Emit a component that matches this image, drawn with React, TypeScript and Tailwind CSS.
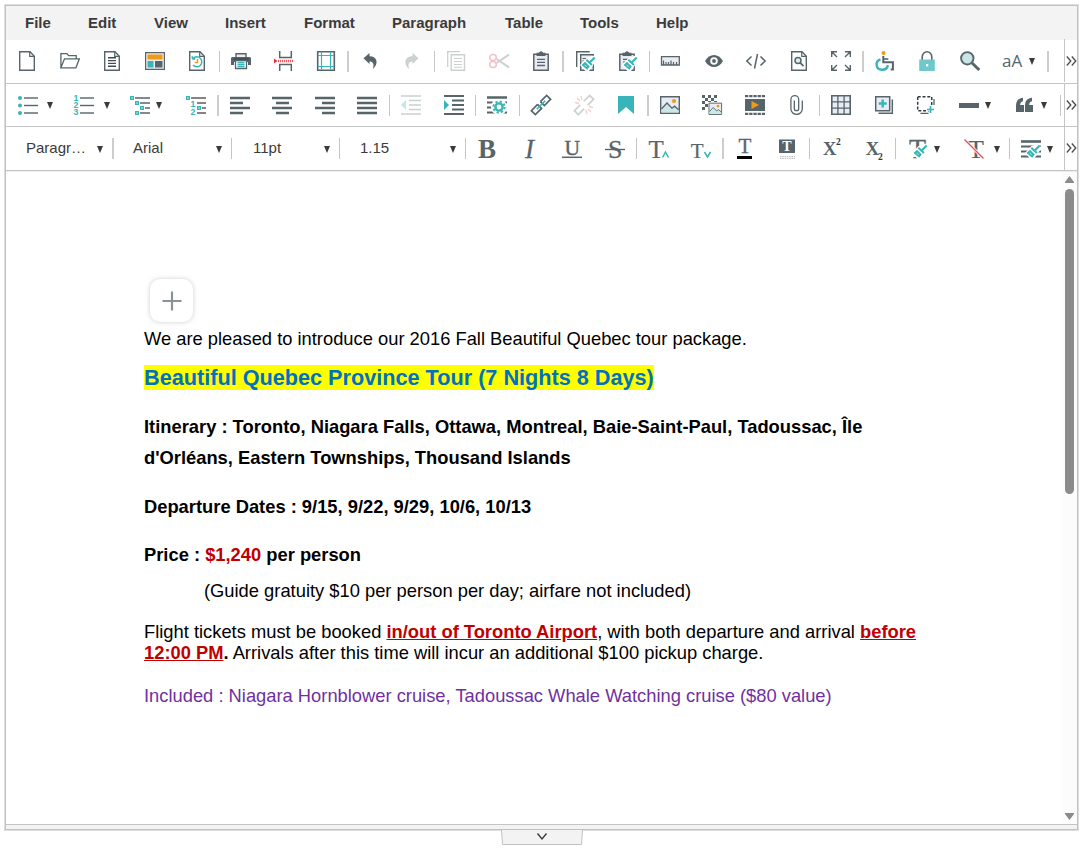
import type { ReactNode } from 'react';

const D = '#57656a';
const T = '#37b5b8';
const O = '#ef9b16';
const L = '#ebebf3';

const serif = { fontFamily: '"Liberation Serif", serif' } as const;

function Tool({ at, children, faded = false, label }: { at: string; children: ReactNode; faded?: boolean; label: string }) {
  return (
    <button aria-label={label} className={`${at} h-5 w-5 shrink-0 ${faded ? 'opacity-30' : ''}`}>
      <svg width="20" height="20" viewBox="0 0 20 20" fill="none" className="block overflow-visible">
        {children}
      </svg>
    </button>
  );
}

function Sep({ at, thick = false }: { at: string; thick?: boolean }) {
  return <span className={`${at} h-[21px] shrink-0 ${thick ? 'w-0.5 bg-[#cdcdcd]' : 'w-px bg-[#c5c5c5]'}`} />;
}

function Arrow({ at }: { at: string }) {
  return (
    <svg width="6" height="7" viewBox="0 0 6 7" className={`${at} mt-px shrink-0`}>
      <path d="M0 0h6L3 7z" fill="#3b3b3b" />
    </svg>
  );
}

function Row({ children, height }: { children: ReactNode; height: string }) {
  return (
    <div className={`flex ${height} border-[#c5c5c5]`}>
      <div className="flex min-w-0 flex-1 items-center">{children}</div>
      <button aria-label="More" className="-mt-px flex w-[13px] shrink-0 items-center border-l border-[#c5c5c5] pl-px">
        <svg width="11" height="10" viewBox="0 0 11 10" fill="none" stroke="#4a4a4a" strokeWidth="1.3">
          <path d="M.8.5l4 4.5-4 4.5M5.8.5l4 4.5-4 4.5" />
        </svg>
      </button>
    </div>
  );
}

const page = (
  <>
    <path d="M2.7.7h10.3l4.3 4.5v14.1H2.7z" fill="#fff" stroke={D} strokeWidth="1.4" />
    <path d="M12.7.7v4.6h4.6" stroke={D} strokeWidth="1.2" />
  </>
);

const brush = (
  <>
    <path d="M17.5 4.5L10.5 7l-6.500 7 5.500 6H13l7.500-11z" fill="#fff" />
    <path d="M18.700 6.500l-5 5" stroke={T} strokeWidth="2.200" />
    <path d="M10.300 8.700l5.600 5.300" stroke={T} strokeWidth="2" />
    <path d="M9 10.700l4.800 4.700-2.600 3.400L5.500 14z" fill={T} />
    <path d="M8.800 13.800l1.800 2" stroke="#b9e6e6" strokeWidth="1" />
  </>
);

const menus: [string, string][] = [
  ['File', 'w-[63px]'],
  ['Edit', 'w-[66px]'],
  ['View', 'w-[71px]'],
  ['Insert', 'w-[79px]'],
  ['Format', 'w-[88px]'],
  ['Paragraph', 'w-[113px]'],
  ['Table', 'w-[75px]'],
  ['Tools', 'w-[76px]'],
  ['Help', 'w-[60px]'],
];

function FileRow() {
  return (
    <Row height="h-11 border-b pb-px">
      <Tool at="ml-[11px]" label="New">{page}</Tool>
      <Tool at="ml-[23px]" label="Open">
        <path d="M.9 16.8V2.7h6l1.8 2h7.500v3M.9 16.8L4.500 7.8h14.8l-3.400 9z" stroke={D} strokeWidth="1.3" />
      </Tool>
      <Tool at="ml-[22px]" label="Document">
        {page}
        <path d="M6 6.8h8M6 9.6h8M6 12.4h8M6 15.2h8" stroke="#444b50" strokeWidth="1.4" />
      </Tool>
      <Tool at="ml-[23px]" label="Template">
        <path d="M.6 1.6h18.8v16.8H.6z" fill={L} stroke={D} strokeWidth="1.2" />
        <path d="M2.5 3.5h15v5h-15z" fill={O} />
        <path d="M2.5 10h6v6.5h-6z" fill={T} />
        <path d="M10 10h7.5v6.5H10z" fill={D} />
      </Tool>
      <Tool at="ml-[22px]" label="History">
        {page}
        <path d="M5.2 8h3M5.3 7.5V5.3M6 7.6a5 5 0 1 1 0 6.5" stroke={T} strokeWidth="1.5" />
        <path d="M10.5 8v3.5H7.7" stroke={O} strokeWidth="1.5" />
      </Tool>
      <Sep at="ml-3" />
      <Tool at="ml-[11px]" label="Print">
        <path d="M5 2.700h10v4H5z" fill="#eee" stroke={D} strokeWidth="1.4" />
        <path d="M1 6h18l1 1v7h-3v-3H3v3H0V7z" fill={D} />
        <path d="M2.5 8h15" stroke="#3d494d" strokeWidth="1.5" />
        <path d="M4.5 9.5h11v8h-11z" fill="#fff" stroke={D} strokeWidth="1.3" />
        <path d="M6.5 11.5h7M6.5 13.5h7M6.5 15.500h7" stroke={T} strokeWidth="1.3" />
      </Tool>
      <Tool at="ml-[23px]" label="Page break">
        <path d="M5.7 0v6.5h11.6V0M5.7 20v-6.5h11.6V20" stroke={D} strokeWidth="1.5" />
        <path d="M0 7.5v5l3.5-2.5z" fill="#e8333f" />
        <path d="M4 10h15.5" stroke="#ef5b65" strokeWidth="2.5" strokeDasharray="1.2 .8" />
      </Tool>
      <Tool at="ml-[22px]" label="Margins">
        <path d="M1.7.7h16.6v18.6H1.7z" stroke={D} strokeWidth="1.6" />
        <path d="M5.5 1v18M14.500 1v18M2 4.500h16M2 15.500h16" stroke={T} strokeWidth="1.2" />
      </Tool>
      <Sep at="ml-[11px]" thick />
      <Tool at="ml-[11px]" label="Undo">
        <path d="M3.5 7.300L9.500 2v3.200c8 0 9.500 7.500 3.200 13 2-5.300.2-7.800-3.200-7.800v2.700z" fill={D} />
      </Tool>
      <Tool at="ml-[22px]" label="Redo" faded>
        <path d="M16.500 7.300L10.500 2v3.200c-8 0-9.500 7.500-3.200 13-2-5.300-.2-7.800 3.200-7.800v2.700z" fill={D} />
      </Tool>
      <Sep at="ml-3" />
      <Tool at="ml-[11px]" label="Copy" faded>
        <path d="M1.7 16V.7H14" stroke={D} strokeWidth="1.3" />
        <path d="M5.2 3.7h13.3v15.5H5.2z" stroke={D} strokeWidth="1.4" />
        <path d="M8 7.5h8M8 10.5h8M8 13.5h8M8 16.2h8" stroke={D} strokeWidth="1.1" />
      </Tool>
      <Tool at="ml-[23px]" label="Cut" faded>
        <path d="M7.500 12L20 3.700M7.500 8L20 16.300" stroke={D} strokeWidth="2" />
        <ellipse cx="4" cy="6.500" rx="3.300" ry="3" stroke="#e8333f" strokeWidth="1.5" />
        <ellipse cx="4" cy="13.500" rx="3.300" ry="3" stroke="#e8333f" strokeWidth="1.5" />
      </Tool>
      <Tool at="ml-[22px]" label="Paste">
        <path d="M2.8 3.2h14.4v16H2.8z" fill={L} stroke={D} strokeWidth="1.5" />
        <path d="M5.5 1.8h2.3a2.3 2.3 0 0 1 4.400 0h2.3V5h-9z" fill={D} />
        <path d="M6 8.300h8M6 11.300h8M6 14.500h8" stroke={D} strokeWidth="1.3" />
      </Tool>
      <Sep at="ml-[11px]" thick />
      <Tool at="ml-3" label="Copy format">
        <path d="M.7 16V.8h13" stroke={D} strokeWidth="1.4" />
        <path d="M4.7 3.8h12.6v15.400H4.7z" fill={L} stroke={D} strokeWidth="1.4" />
        <path d="M6.500 7.500h8M6.500 10h4" stroke={D} strokeWidth="1.2" />
        {brush}
      </Tool>
      <Tool at="ml-[22px]" label="Paste format">
        <path d="M1.8 3.2h14.400v16H1.8z" fill={L} stroke={D} strokeWidth="1.5" />
        <path d="M4.500 1.800h2.300a2.300 2.300 0 0 1 4.400 0h2.300V5h-9z" fill={D} />
        <path d="M5 8.300h8M5 11h3" stroke={D} strokeWidth="1.2" />
        {brush}
      </Tool>
      <Sep at="ml-[11px]" />
      <Tool at="ml-[10px]" label="Ruler">
        <path d="M1.500 5.700h17.800v8.300H1.500z" fill={L} stroke={D} strokeWidth="1.3" />
        <path d="M3.500 14V9.500M6 14v-3M8.500 14v-3M11 14V9.500M13.500 14v-3M16.500 14v-3" stroke={D} strokeWidth="1.2" />
      </Tool>
      <Tool at="ml-6" label="Preview">
        <path d="M1 10c4.500-8 13.500-8 18 0-4.500 8-13.500 8-18 0z" fill={D} />
        <circle cx="10" cy="10" r="3.8" fill="#fff" />
        <circle cx="10" cy="10" r="1.9" fill={D} />
      </Tool>
      <Tool at="ml-[22px]" label="Source">
        <path d="M5.500 5.500L.8 10l4.700 4.500M14.500 5.500l4.700 4.500-4.700 4.500M11.500 3L8.500 17.500" stroke={D} strokeWidth="1.5" />
      </Tool>
      <Tool at="ml-[23px]" label="Print preview">
        {page}
        <circle cx="9" cy="9.500" r="3" fill="#dcecf4" stroke={D} strokeWidth="1.5" />
        <path d="M11.300 11.800l3.200 3.400" stroke={D} strokeWidth="1.8" />
      </Tool>
      <Tool at="ml-[22px]" label="Full screen">
        <path d="M.7 6V.7H6M.7.7L6 6M14 .7h5.300V6M19.300.7L14 6M.7 14v5.300H6M.7 19.300L6 14M14 19.300h5.300V14M19.300 19.300L14 14" stroke={D} strokeWidth="1.4" />
      </Tool>
      <Sep at="ml-[11px]" thick />
      <Tool at="ml-[11px]" label="Accessibility">
        <circle cx="8.500" cy="2" r="2" fill={O} />
        <path d="M8.300 5v6.300h9.600v7.200h-2.200" stroke={D} strokeWidth="2" />
        <path d="M8.300 8h5" stroke={D} strokeWidth="1.600" />
        <path d="M5.500 8.300C-.3 10 .5 18.800 7 18.800c3.500 0 5.500-2 5.800-4.800" stroke={T} strokeWidth="2.400" />
      </Tool>
      <Tool at="ml-[22px]" label="Lock">
        <path d="M5.200 9V6a4.800 5.200 0 0 1 9.600 0v3" stroke={D} strokeWidth="1.6" />
        <path d="M2.200 8.500h15.600V20H2.200z" fill="#6fc9ca" />
        <path d="M9 13h2.200v2.400H9z" fill="#fff" />
      </Tool>
      <Tool at="ml-[23px]" label="Find">
        <path d="M12 12l7.300 7" stroke={D} strokeWidth="3" />
        <circle cx="7.300" cy="7.300" r="6.200" fill="#c9e5e6" stroke={D} strokeWidth="1.9" />
      </Tool>
      <span className="ml-[22px] w-[23px] shrink-0 font-['Open_Sans',sans-serif] text-[17px] leading-5 text-[#57656a]">aA</span>
      <Arrow at="ml-[4px]" />
      <Sep at="ml-3" thick />
    </Row>
  );
}

const numbers = [1, 2, 3];
const miniSquare = (x: number, y: number) => <rect key={`${x}-${y}`} x={x} y={y} width="2.6" height="2.6" stroke={T} strokeWidth="1.4" />;

const gear = (
  <>
    <circle cx="12" cy="12" r="8" fill="#fff" />
    <circle cx="12" cy="12" r="5.6" stroke={T} strokeWidth="2" strokeDasharray="2.2 2.2" />
    <circle cx="12" cy="12" r="3.6" stroke={T} strokeWidth="2.4" />
  </>
);

const photo = (
  <>
    <path d="M.7 1.7h18.6v16.6H.7z" fill={L} stroke={D} strokeWidth="1.4" />
    <path d="M1.400 14l5.600-6 5 5.200 2.500-2 4.200 3.500v2.900H1.400z" fill="#cbe7e7" />
    <path d="M1.400 14L7 8l5 5.200 2.500-2 4.200 3.500" stroke={D} strokeWidth="1.3" />
    <circle cx="14" cy="6" r="2.1" fill={O} />
  </>
);

function InsertRow() {
  return (
    <Row height="h-[43px] border-b">
      <Tool at="ml-3" label="Bullets">
        {[3, 10.5, 18].map((y) => (
          <g key={y}>
            <circle cx="2" cy={y} r="2" fill={T} />
            <path d={`M6 ${y}h14`} stroke={D} strokeWidth="1.4" />
          </g>
        ))}
      </Tool>
      <Arrow at="ml-[9px]" />
      <Tool at="ml-[21px]" label="Numbering">
        {numbers.map((n) => (
          <g key={n}>
            <path d={`M6 ${n * 7.5 - 4.5}h14`} stroke={D} strokeWidth="1.4" />
            <text x="-.5" y={n * 7.2 - 1.2} fontSize="8.8" fontWeight="700" fill={T} fontFamily="Liberation Sans, sans-serif">{n}</text>
          </g>
        ))}
      </Tool>
      <Arrow at="ml-[10px]" />
      <Tool at="ml-5" label="Multilevel list">
        {miniSquare(0.7, 1.7)}
        {miniSquare(5.7, 6.7)}
        {miniSquare(10.7, 11.7)}
        {miniSquare(5.7, 16.7)}
        <path d="M5 3h15M10 8h10M15 13h5M10 18h10" stroke={D} strokeWidth="1.500" />
      </Tool>
      <Arrow at="ml-[6px]" />
      <Tool at="ml-6" label="Outline">
        {miniSquare(0.7, 1.7)}
        {miniSquare(11.7, 11.7)}
        <path d="M5 3h15M11 8h9M16 13h4M11 18h9" stroke="#62595d" strokeWidth="1.500" />
        <text x="4.500" y="12.200" fontSize="8.800" fontWeight="700" fill={T} fontFamily="Liberation Sans, sans-serif">1</text>
        <text x="4.500" y="20.200" fontSize="8.800" fontWeight="700" fill={T} fontFamily="Liberation Sans, sans-serif">2</text>
      </Tool>
      <Sep at="ml-[11px]" thick />
      <Tool at="ml-[11px]" label="Align left">
        <path d="M0 3h20M0 8h13M0 13h20M0 18h13" stroke={D} strokeWidth="2.4" />
      </Tool>
      <Tool at="ml-[22px]" label="Align center">
        <path d="M0 3h20M4 8h13M0 13h20M4 18h13" stroke={D} strokeWidth="2.4" />
      </Tool>
      <Tool at="ml-[23px]" label="Align right">
        <path d="M0 3h20M7 8h13M0 13h20M7 18h13" stroke={D} strokeWidth="2.4" />
      </Tool>
      <Tool at="ml-[22px]" label="Justify">
        <path d="M0 3h20M0 8h20M0 13h20M0 18h20" stroke={D} strokeWidth="2.4" />
      </Tool>
      <Sep at="ml-3" />
      <Tool at="ml-[11px]" label="Outdent" faded>
        <path d="M0 1h20M8 5.500h12M8 10h12M8 14.500h12M0 19h20" stroke={D} strokeWidth="1.7" />
        <path d="M5 5v10L0 10z" fill={T} />
      </Tool>
      <Tool at="ml-[23px]" label="Indent">
        <path d="M0 1h20M8 5.500h12M8 10h12M8 14.500h12M0 19h20" stroke={D} strokeWidth="1.8" />
        <path d="M0 5v10l5-5z" fill={T} />
      </Tool>
      <Sep at="ml-[11px]" />
      <Tool at="ml-[11px]" label="Line settings">
        <path d="M0 2.500h20M0 7.500h20M0 12.500h20M0 17.500h20" stroke={D} strokeWidth="2" />
        {gear}
        <path d="M0 2.500h20" stroke={D} strokeWidth="2" />
      </Tool>
      <Sep at="ml-3" />
      <Tool at="ml-[11px]" label="Link">
        <g transform="rotate(-45 10 10)" stroke={D} strokeWidth="1.7">
          <path d="M8 7.200H-.8v5.600H8V7.200M12 7.200h8.800v5.600H12V7.200" />
          <path d="M4 10h12" stroke={T} />
        </g>
      </Tool>
      <Tool at="ml-[23px]" label="Unlink" faded>
        <g transform="rotate(-45 10 10)" stroke={D} strokeWidth="1.7">
          <path d="M7.500 7.200H-.8v5.600H7.500M12.500 7.200h8.300v5.600h-8.300" />
        </g>
        <path d="M7 1l1 4M3 3l3 3M1 7.500l4 1M13 19l-1-4M17 17l-3-3M19 12.500l-4-1" stroke="#e85b65" strokeWidth="1.3" />
      </Tool>
      <Tool at="ml-[22px]" label="Bookmark">
        <path d="M2 1h16v18l-8-7-8 7z" fill={T} />
      </Tool>
      <Sep at="ml-[11px]" thick />
      <Tool at="ml-[11px]" label="Image">{photo}</Tool>
      <Tool at="ml-[22px]" label="Background image">
        {[0, 1, 2, 3, 4].flatMap((r) =>
          [0, 1, 2, 3, 4].filter((c) => (r + c) % 2 === 0 && r + c < 7).map((c) => <rect key={`${r}${c}`} x={c * 3} y={r * 3} width="3" height="3" fill={D} />)
        )}
        <path d="M6 7h14v13H6z" fill="#fff" />
        <g transform="translate(6.5 7) scale(.68)">{photo}</g>
      </Tool>
      <Tool at="ml-[23px]" label="Video">
        <path d="M0 4h20v12H0z" fill={D} />
        <path d="M0 1.200h20M0 18.800h20" stroke={D} strokeWidth="2.2" strokeDasharray="3.3 .9" />
        <path d="M6.500 6v8l7.500-4z" fill={O} />
      </Tool>
      <Tool at="ml-[22px]" label="Attachment">
        <path d="M7.300 5.500v8a2.200 2.200 0 0 0 4.400 0V4.500a3.900 3.900 0 0 0-7.800 0V13.700a5.700 5.700 0 0 0 11.400 0V5.500" stroke={D} strokeWidth="1.300" />
      </Tool>
      <Sep at="ml-3" />
      <Tool at="ml-[11px]" label="Table">
        <path d="M.8.8h18.400v18.400H.8z" fill={L} stroke={D} strokeWidth="1.6" />
        <path d="M6.900 0v20M13.100 0v20M0 6.900h20M0 13.100h20" stroke={D} strokeWidth="1.300" />
      </Tool>
      <Tool at="ml-[23px]" label="Add layer">
        <path d="M4.500 18.300h13.800V4.500" stroke={D} strokeWidth="1.5" />
        <path d="M1.700 1.700h14v14h-14z" fill={L} stroke={D} strokeWidth="1.5" />
        <path d="M8.700 4.500v8M4.700 8.500h8" stroke={T} strokeWidth="2.4" />
      </Tool>
      <Tool at="ml-[22px]" label="Add area">
        <path d="M4.500 18.300h8M18 4v6" stroke={D} strokeWidth="1.3" />
        <path d="M1.700 1.700h14v14h-14z" stroke="#333d40" strokeWidth="1.5" strokeDasharray="3 1.8" />
        <path d="M10.500 10H20v10h-7v-4h-2.500z" fill="#fff" />
        <path d="M14.500 11v7M11 14.500h7" stroke={T} strokeWidth="1.7" />
      </Tool>
      <Tool at="ml-[23px]" label="Horizontal line">
        <path d="M0 10.500h20" stroke={D} strokeWidth="5" />
      </Tool>
      <Arrow at="ml-[6px]" />
      <Tool at="ml-[23px]" label="Quote">
        <path d="M2 17v-6C2 6 4 3.500 9 2.800v3.400c-2 .6-2.700 1.800-2.800 3.800H10v7zM11 17v-6c0-5 2-7.500 7-8.200v3.400c-2 .6-2.700 1.800-2.800 3.800H19v7z" fill={D} />
      </Tool>
      <Arrow at="ml-[7px]" />
      <Sep at="ml-[13px]" />
    </Row>
  );
}

function FontRow() {
  return (
    <Row height="h-[43px]">
      <span className="ml-5 w-[65px] shrink-0 whitespace-nowrap">Paragr…</span>
      <Arrow at="ml-[6px]" />
      <Sep at="ml-[9px]" thick />
      <span className="ml-[19px] w-[76px] shrink-0">Arial</span>
      <Arrow at="ml-[7px]" />
      <Sep at="ml-[9px]" />
      <span className="ml-[21px] w-16 shrink-0">11pt</span>
      <Arrow at="ml-[7px]" />
      <Sep at="ml-[9px]" />
      <span className="ml-5 w-[83px] shrink-0">1.15</span>
      <Arrow at="ml-[7px]" />
      <Sep at="ml-[9px]" />
      <Tool at="ml-[11px]" label="Bold">
        <text x="1" y="18.500" fontSize="27" fontWeight="700" fill={D} style={serif}>B</text>
      </Tool>
      <Tool at="ml-[23px]" label="Italic">
        <text x="5" y="18.500" fontSize="27" fontStyle="italic" fill={D} stroke={D} strokeWidth=".3" style={serif}>I</text>
      </Tool>
      <Tool at="ml-[22px]" label="Underline">
        <text x="2.400" y="15.500" fontSize="21.500" fill={D} stroke={D} strokeWidth=".4" style={serif}>U</text>
        <path d="M0 18.300h20" stroke={D} strokeWidth="1.500" />
      </Tool>
      <Tool at="ml-[23px]" label="Strikethrough">
        <text x="3" y="18.500" fontSize="26" fill={D} stroke={D} strokeWidth=".3" style={serif}>S</text>
        <path d="M0 10.500h20" stroke={D} strokeWidth="1.400" />
      </Tool>
      <Sep at="ml-[11px]" />
      <Tool at="ml-3" label="Increase size">
        <text x="-.5" y="18.500" fontSize="25" fill={D} stroke={D} strokeWidth=".2" style={serif}>T</text>
        <path d="M13.500 18.500l3-5.500 3 5.500" stroke={T} strokeWidth="1.500" />
      </Tool>
      <Tool at="ml-[22px]" label="Decrease size">
        <text x="-.3" y="18.500" fontSize="21" fill={D} stroke={D} strokeWidth=".2" style={serif}>T</text>
        <path d="M13.500 13l3 5 3-5" stroke={T} strokeWidth="1.500" />
      </Tool>
      <Sep at="ml-[11px]" thick />
      <Tool at="ml-[11px]" label="Text color">
        <text x="3.500" y="14" fontSize="21" fill={D} stroke={D} strokeWidth=".3" style={serif}>T</text>
        <path d="M2 18.500h15" stroke="#000" strokeWidth="3" />
      </Tool>
      <Tool at="ml-[22px]" label="Highlight color">
        <path d="M2 .500h16v13.500H2z" fill={D} />
        <text x="5.300" y="12" fontSize="14" fontWeight="700" fill="#fff" style={serif}>T</text>
        <path d="M3 17.500h15M3 19.300h15" stroke="#c2c2c2" strokeWidth="1.200" strokeDasharray="1.500 .8" />
      </Tool>
      <Sep at="ml-3" />
      <Tool at="ml-[12px]" label="Superscript">
        <text x="1" y="16" fontSize="18.500" fontWeight="700" fill={D} style={serif}>X</text>
        <text x="14" y="6" fontSize="9.500" fontWeight="700" fill="#2f3a3d" style={serif}>2</text>
      </Tool>
      <Tool at="ml-[23px]" label="Subscript">
        <text x=".8" y="16" fontSize="18.500" fontWeight="700" fill={D} style={serif}>X</text>
        <text x="13" y="20.500" fontSize="9.500" fontWeight="700" fill="#2f3a3d" style={serif}>2</text>
      </Tool>
      <Sep at="ml-[10px]" />
      <Tool at="ml-3" label="Text style">
        <text x="1" y="19" fontSize="28" fill={D} stroke={D} strokeWidth=".3" style={serif}>T</text>
        {brush}
      </Tool>
      <Arrow at="ml-[6px]" />
      <Tool at="ml-6" label="Clear formatting">
        <text x="4" y="18.500" fontSize="26" fill={D} stroke={D} strokeWidth=".2" style={serif}>T</text>
        <path d="M.500.500l19 19" stroke="#fff" strokeWidth="3" />
        <path d="M.500.500l19 19" stroke="#f04a52" strokeWidth="1.300" />
      </Tool>
      <Arrow at="ml-[10px]" />
      <Sep at="ml-[9px]" />
      <Tool at="ml-[11px]" label="Paragraph style">
        <path d="M0 2.500h20M0 7.500h20M0 12.500h20M0 17.500h20" stroke={D} strokeWidth="2.200" />
        {brush}
        <path d="M0 2.500h20" stroke={D} strokeWidth="2.200" />
      </Tool>
      <Arrow at="ml-[6px]" />
    </Row>
  );
}

export default function App() {
  return (
    <main className="flex h-[857px] w-[1084px] flex-col bg-white pl-1 pt-1 font-['Liberation_Sans',Arial,sans-serif] text-[15px] text-[#3b3b3b]">
      <div className="w-[1075px] border border-[#dedede]">
        <div className="flex h-[825px] flex-col border border-[#c1c1c1]">
          <nav className="flex h-[34px] shrink-0 items-center bg-[#f3f3f3] pl-[19px] font-bold">
            {menus.map(([name, width]) => (
              <span key={name} className={`${width} shrink-0`}>{name}</span>
            ))}
          </nav>
          <div className="shrink-0 border-b border-[#c5c5c5]">
            <FileRow />
            <InsertRow />
            <FontRow />
          </div>
          <div className="flex min-h-0 flex-1 border-t border-[#ececec]">
            <article className="min-w-0 flex-1 pl-[138px] pt-[107px] text-[18.33px] leading-[21px] text-black">
              <button aria-label="Add block" className="ml-[6px] flex h-[43px] w-[43px] items-center justify-center rounded-[10px] bg-white shadow-[0_0_5px_rgba(0,0,0,0.2)]">
                <svg width="20" height="20" viewBox="0 0 20 20" stroke="#8b9195" strokeWidth="2.2">
                  <path d="M10 .500v19M.500 10h19" />
                </svg>
              </button>
              <div className="w-[790px]">
                <p className="mt-[6px]">We are pleased to introduce our 2016 Fall Beautiful Quebec tour package.</p>
                <h1 className="mt-4 text-[21.67px] font-bold leading-[25px] text-[#0070c0]">
                  <span className="bg-[#ffff00]">Beautiful Quebec Province Tour (7 Nights 8 Days)</span>
                </h1>
                <p className="mt-[21px] font-bold leading-[31px]">Itinerary : Toronto, Niagara Falls, Ottawa, Montreal, Baie-Saint-Paul, Tadoussac, Île d'Orléans, Eastern Townships, Thousand Islands</p>
                <p className="mt-[23px] font-bold">Departure Dates : 9/15, 9/22, 9/29, 10/6, 10/13</p>
                <p className="mt-[27px] font-bold">Price : <span className="text-[#c00000]">$1,240</span> per person</p>
                <p className="mt-[15px] pl-[60px]">(Guide gratuity $10 per person per day; airfare not included)</p>
                <p className="mt-5">
                  Flight tickets must be booked <b className="text-[#c00000] underline">in/out of Toronto Airport</b>, with both departure and arrival <b className="text-[#c00000] underline">before 12:00 PM</b><b>.</b> Arrivals after this time will incur an additional $100 pickup charge.
                </p>
                <p className="mt-[22px] text-[#7030a0]">Included : Niagara Hornblower cruise, Tadoussac Whale Watching cruise ($80 value)</p>
              </div>
            </article>
            <div className="flex w-[15px] shrink-0 flex-col items-center bg-[#fcfcfc]">
              <svg width="9" height="7" viewBox="0 0 9 7" className="mt-1 ml-[-1px]"><path d="M4.500 0L9 6v1H0V6z" fill="#8b8b8b" /></svg>
              <span className="mt-[6px] ml-[-1px] h-[305px] w-[9px] rounded-full bg-[#8b8b8b]" />
              <svg width="9" height="7" viewBox="0 0 9 7" className="mb-1 ml-[-1px] mt-auto"><path d="M4.500 7L9 1V0H0v1z" fill="#8b8b8b" /></svg>
            </div>
          </div>
          <div className="h-[5px] shrink-0 border-t border-[#c5c5c5] bg-[#f3f3f3]" />
        </div>
      </div>
      <button aria-label="Resize" className="-mt-px ml-[497px] flex h-4 w-[82px] items-center justify-center">
        <svg width="82" height="16" viewBox="0 0 82 16" fill="none">
          <path d="M.500 0L1.500 14.500h79L81.500 0" fill="#f3f3f3" stroke="#c1c1c1" />
          <path d="M36.500 3.500l4.500 5.500 4.500-5.500" stroke="#3b3b3b" strokeWidth="1.400" />
        </svg>
      </button>
    </main>
  );
}
